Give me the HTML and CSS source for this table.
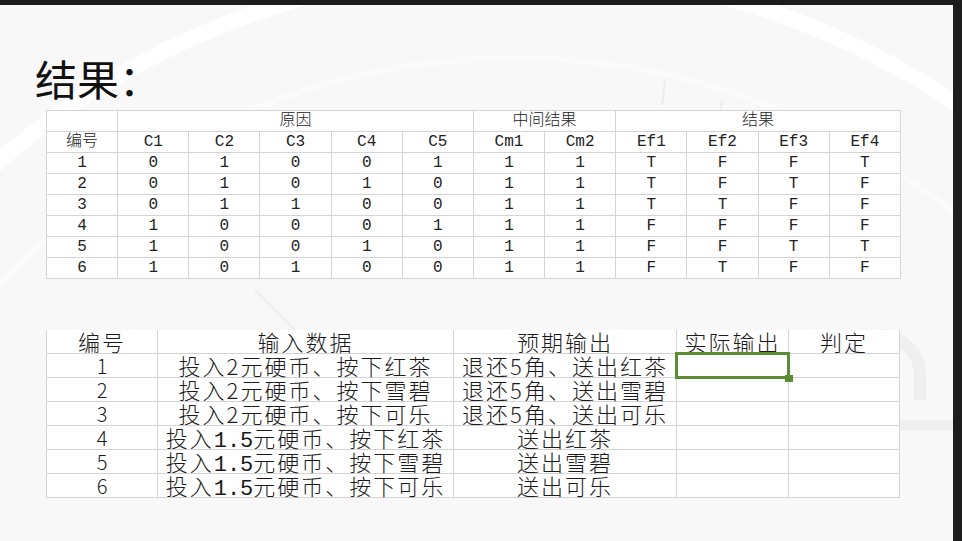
FILE: index.html
```html
<!DOCTYPE html>
<html lang="zh-CN">
<head>
<meta charset="utf-8">
<title>结果</title>
<link rel="stylesheet" href="styles.css">
</head>
<body>
<div class="screen">
  <div class="topbar"></div>
  <div class="main">
    <div class="slide">
      <svg class="wm" width="953" height="536" viewBox="0 0 953 536" aria-hidden="true">
        <circle cx="515" cy="753" r="789" fill="none" stroke="#ffffff" stroke-width="16"/>
        <circle cx="515" cy="753" r="700" fill="none" stroke="#fbfbfb" stroke-width="6"/>
        <line x1="665" y1="75" x2="662" y2="100" stroke="#ececec" stroke-width="2"/>
        <line x1="722" y1="95" x2="720" y2="108" stroke="#ececec" stroke-width="2"/>
        <line x1="255" y1="285" x2="300" y2="330" stroke="#ececec" stroke-width="2"/>
        <path d="M880 330 A40 40 0 0 1 920 370 L920 395" fill="none" stroke="#efefef" stroke-width="12"/>
        <rect x="850" y="415" width="103" height="10" fill="#efefef"/>
      </svg>

      <h1 class="title">结果：</h1>

      <table class="t1">
        <colgroup>
          <col><col><col><col><col><col><col><col><col><col><col><col>
        </colgroup>
        <tr><td></td><td colspan="5">原因</td><td colspan="2">中间结果</td><td colspan="4">结果</td></tr>
        <tr><td>编号</td><td>C1</td><td>C2</td><td>C3</td><td>C4</td><td>C5</td><td>Cm1</td><td>Cm2</td><td>Ef1</td><td>Ef2</td><td>Ef3</td><td>Ef4</td></tr>
        <tr><td>1</td><td>0</td><td>1</td><td>0</td><td>0</td><td>1</td><td>1</td><td>1</td><td>T</td><td>F</td><td>F</td><td>T</td></tr>
        <tr><td>2</td><td>0</td><td>1</td><td>0</td><td>1</td><td>0</td><td>1</td><td>1</td><td>T</td><td>F</td><td>T</td><td>F</td></tr>
        <tr><td>3</td><td>0</td><td>1</td><td>1</td><td>0</td><td>0</td><td>1</td><td>1</td><td>T</td><td>T</td><td>F</td><td>F</td></tr>
        <tr><td>4</td><td>1</td><td>0</td><td>0</td><td>0</td><td>1</td><td>1</td><td>1</td><td>F</td><td>F</td><td>F</td><td>F</td></tr>
        <tr><td>5</td><td>1</td><td>0</td><td>0</td><td>1</td><td>0</td><td>1</td><td>1</td><td>F</td><td>F</td><td>T</td><td>T</td></tr>
        <tr><td>6</td><td>1</td><td>0</td><td>1</td><td>0</td><td>0</td><td>1</td><td>1</td><td>F</td><td>T</td><td>F</td><td>F</td></tr>
      </table>

      <table class="t2">
        <colgroup>
          <col class="c-no"><col class="c-in"><col class="c-exp"><col class="c-act"><col class="c-res">
        </colgroup>
        <tr class="head"><td>编号</td><td>输入数据</td><td>预期输出</td><td>实际输出</td><td>判定</td></tr>
        <tr><td class="mono num">1</td><td>投入2元硬币、按下红茶</td><td>退还5角、送出红茶</td><td class="sel"><div class="selbox"><span class="handle"></span></div></td><td></td></tr>
        <tr><td class="mono num">2</td><td>投入2元硬币、按下雪碧</td><td>退还5角、送出雪碧</td><td></td><td></td></tr>
        <tr><td class="mono num">3</td><td>投入2元硬币、按下可乐</td><td>退还5角、送出可乐</td><td></td><td></td></tr>
        <tr><td class="mono num">4</td><td>投入<span class="mono">1.5</span>元硬币、按下红茶</td><td>送出红茶</td><td></td><td></td></tr>
        <tr><td class="mono num">5</td><td>投入<span class="mono">1.5</span>元硬币、按下雪碧</td><td>送出雪碧</td><td></td><td></td></tr>
        <tr><td class="mono num">6</td><td>投入<span class="mono">1.5</span>元硬币、按下可乐</td><td>送出可乐</td><td></td><td></td></tr>
      </table>
    </div>
    <div class="side"></div>
  </div>
</div>
</body>
</html>
```

FILE: styles.css
```css
html, body {
  margin: 0;
  padding: 0;
}

body {
  background: #1c1c1c;
  font-family: "Noto Sans CJK SC", sans-serif;
}

.screen {
  width: 962px;
  height: 541px;
  display: flex;
  flex-direction: column;
  overflow: hidden;
}

.topbar {
  height: 5px;
  background: #1c1c1c;
}

.main {
  flex: 1;
  display: flex;
}

.slide {
  flex: 1;
  position: relative;
  background: #f8f8f8;
  overflow: hidden;
}

.side {
  width: 9px;
  background: #1c1c1c;
}

.wm {
  position: absolute;
  left: 0;
  top: 0;
  z-index: 0;
}

.title,
.t1,
.t2 {
  position: relative;
  z-index: 1;
}

.title {
  margin: 52px 0 0 35px;
  height: 42px;
  font-size: 42px;
  line-height: 42px;
  font-weight: 400;
  color: #111;
}

/* ---------- table 1 ---------- */
.t1 {
  margin: 11px 0 0 46px;
  width: 855px;
  border-collapse: collapse;
  table-layout: fixed;
  background: #fff;
}

.t1 td {
  border: 1px solid #d4d4d4;
  padding: 0;
  height: 20px;
  text-align: center;
  vertical-align: middle;
  font-family: "Liberation Mono", "Noto Sans CJK SC", monospace;
  font-weight: 300;
  font-size: 16px;
  line-height: 20px;
  color: #222;
  white-space: nowrap;
}

/* ---------- table 2 ---------- */
.t2 {
  margin: 51px 0 0 46px;
  width: 853px;
  border-collapse: collapse;
  table-layout: fixed;
  background: #fff;
}

.t2 .c-no { width: 111px; }
.t2 .c-in { width: 296px; }
.t2 .c-exp { width: 223px; }
.t2 .c-act { width: 112px; }
.t2 .c-res { width: 111px; }

.t2 td {
  border: 1px solid #d4d4d4;
  padding: 0;
  height: 23px;
  text-align: center;
  vertical-align: middle;
  font-family: "Noto Sans CJK SC", sans-serif;
  font-weight: 300;
  font-size: 22px;
  letter-spacing: 2px;
  line-height: 23px;
  color: #1a1a1a;
  white-space: nowrap;
  overflow: visible;
}

.t2 .head td {
  border-top: none;
}

.mono {
  font-family: "Liberation Mono", monospace;
}

.t2 td.num {
  font-size: 20px;
  letter-spacing: 0;
}

.t2 td .mono {
  line-height: 0;
  letter-spacing: 0;
}

.t2 .sel {
  position: relative;
}

.selbox {
  position: absolute;
  left: -2px;
  top: -2px;
  right: -2px;
  bottom: -2px;
  border: 3px solid #5c8c34;
}

.handle {
  position: absolute;
  right: -6px;
  bottom: -6px;
  width: 8px;
  height: 7px;
  background: #5c8c34;
}
```
